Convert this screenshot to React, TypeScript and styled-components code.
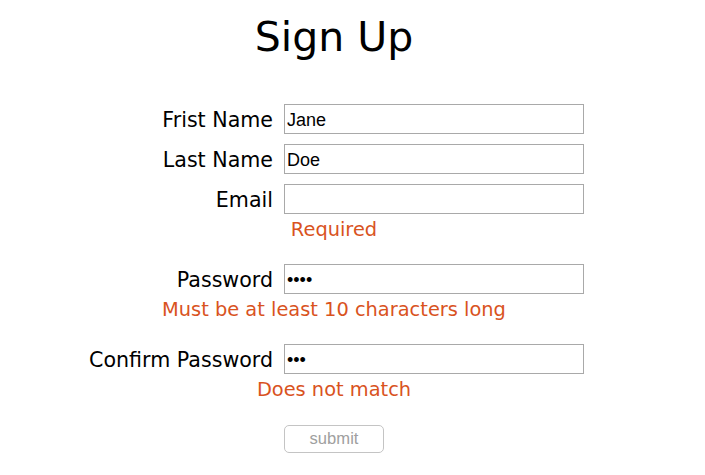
import React from "react";
import styled, { createGlobalStyle } from "styled-components";

const Global = createGlobalStyle`
  body {
    margin: 8px;
    background: #ffffff;
    font-family: "DejaVu Sans", sans-serif;
    color: #000;
  }
`;

const Page = styled.div`
  width: 652px;
  display: flex;
  flex-direction: column;
  align-items: center;
`;

const Title = styled.h1`
  margin: 5px 0 43px;
  font-family: "DejaVu Sans", sans-serif;
  font-weight: 400;
  font-size: 41px;
  line-height: 48px;
`;

const Form = styled.form`
  display: grid;
  grid-template-columns: 189px 300px;
  column-gap: 11px;
  align-items: center;
`;

const Label = styled.label`
  text-align: right;
  font-size: 20.6px;
  line-height: 24px;
  margin-bottom: 10px;
  padding-top: 1px;
  white-space: nowrap;
`;

const Input = styled.input`
  box-sizing: border-box;
  width: 300px;
  height: 30px;
  margin: 0 0 10px;
  padding: 2px 2px 0;
  border: 1px solid #a9a9a9;
  font-family: "Liberation Sans", Arial, sans-serif;
  font-size: 18px;
  color: #000;
  outline: none;
`;

const Error = styled.div`
  grid-column: 1 / -1;
  text-align: center;
  color: #d9531e;
  font-size: 19.4px;
  line-height: 22px;
  height: 40px;
  box-sizing: border-box;
  padding-top: 5px;
  margin: -10px 0 10px;
`;

const ButtonCell = styled.div`
  grid-column: 2;
  padding-top: 1px;
`;

const Submit = styled.button`
  box-sizing: border-box;
  width: 100px;
  height: 28px;
  border: 1px solid #c4c4c4;
  border-radius: 5px;
  background: #fff;
  color: #a0a0a0;
  font-family: "Liberation Sans", Arial, sans-serif;
  font-size: 16.6px;
  padding: 0;
`;

type FieldProps = {
  id: string;
  label: string;
  type?: string;
  value: string;
  error?: string;
};

const Field = ({ id, label, type = "text", value, error }: FieldProps) => (
  <>
    <Label htmlFor={id}>{label}</Label>
    <Input id={id} type={type} defaultValue={value} />
    {error && <Error>{error}</Error>}
  </>
);

export default function App() {
  return (
    <>
      <Global />
      <Page>
        <Title>Sign Up</Title>
        <Form onSubmit={(e) => e.preventDefault()}>
          <Field id="first" label="Frist Name" value="Jane" />
          <Field id="last" label="Last Name" value="Doe" />
          <Field id="email" label="Email" value="" error="Required" />
          <Field
            id="password"
            label="Password"
            type="password"
            value="abcd"
            error="Must be at least 10 characters long"
          />
          <Field
            id="confirm"
            label="Confirm Password"
            type="password"
            value="abc"
            error="Does not match"
          />
          <ButtonCell>
            <Submit type="submit" disabled>
              submit
            </Submit>
          </ButtonCell>
        </Form>
      </Page>
    </>
  );
}
